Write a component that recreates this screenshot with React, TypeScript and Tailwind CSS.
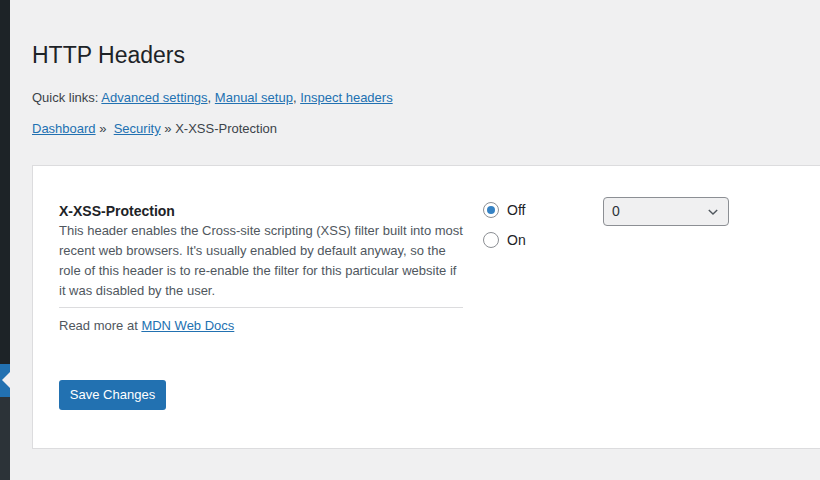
import React from 'react'

const font = { fontFamily: '"Liberation Sans", Arial, sans-serif' }

const Sidebar = () => (
  <div className="flex w-[10px] shrink-0 flex-col">
    <div className="h-[364px] bg-[#1d2327]" />
    <div className="relative h-[33px] bg-[#2271b1]">
      <div className="absolute right-0 top-[8px] h-0 w-0 border-y-[8px] border-r-[8px] border-y-transparent border-r-[#f0f0f1]" />
    </div>
    <div className="flex-1 bg-[#2c3338]" />
  </div>
)

const Radio = ({ label, checked }: { label: string; checked?: boolean }) => (
  <label className="flex h-[30px] items-center gap-[8px] text-[14px] text-[#1d2327]">
    <span className="flex h-[16px] w-[16px] items-center justify-center rounded-full border border-[#8c8f94] bg-white">
      {checked && <span className="h-[8px] w-[8px] rounded-full bg-[#3582c4]" />}
    </span>
    {label}
  </label>
)

export default function App() {
  return (
    <div className="flex h-[480px] w-[820px] overflow-hidden bg-[#f0f0f1] text-[13px] text-[#3c434a]" style={font}>
      <Sidebar />
      <div className="min-w-0 flex-1 pl-[22px]">
        <h1 className="pt-[40px] text-[23px] font-normal leading-[30px] text-[#1d2327]">HTTP Headers</h1>
        <p className="mt-[18px] leading-[20px]">
          Quick links: <a className="text-[#2271b1] underline">Advanced settings</a>,{' '}
          <a className="text-[#2271b1] underline">Manual setup</a>,{' '}
          <a className="text-[#2271b1] underline">Inspect headers</a>
        </p>
        <p className="mt-[11px] leading-[20px]">
          <a className="text-[#2271b1] underline">Dashboard</a> »&nbsp;{' '}
          <a className="text-[#2271b1] underline">Security</a> » X-XSS-Protection
        </p>

        <div className="mt-[26px] w-[820px] border border-[#dcdcde] bg-white pb-[38px] pl-[26px] pt-[35px]">
          <div className="flex">
            <div className="w-[404px]">
              <h2 className="text-[14px] font-bold leading-[20px] text-[#1d2327]">X-XSS-Protection</h2>
              <p className="leading-[20px] text-[#50575e]">
                This header enables the Cross-site scripting (XSS) filter built into most recent web browsers. It's
                usually enabled by default anyway, so the role of this header is to re-enable the filter for this
                particular website if it was disabled by the user.
              </p>
              <div className="mt-[6px] border-t border-[#dcdcde] pt-[8px] leading-[20px] text-[#50575e]">
                Read more at <a className="text-[#2271b1] underline">MDN Web Docs</a>
              </div>
            </div>
            <div className="ml-[20px] w-[120px] -mt-[6px]">
              <Radio label="Off" checked />
              <Radio label="On" />
            </div>
            <div className="-mt-[4px]">
              <div className="flex h-[29px] w-[126px] items-center justify-between rounded-[4px] border border-[#8c8f94] bg-[#f0f0f1] pl-[8px] pr-[8px] text-[14px] text-[#2c3338]">
                <span>0</span>
                <svg width="14" height="14" viewBox="0 0 20 20" fill="none" stroke="#50575e" strokeWidth="2">
                  <path d="M4 7l6 6 6-6" />
                </svg>
              </div>
            </div>
          </div>

          <button className="mt-[44px] h-[30px] w-[107px] rounded-[3px] bg-[#2271b1] text-[13px] text-white">
            Save Changes
          </button>
        </div>
      </div>
    </div>
  )
}
